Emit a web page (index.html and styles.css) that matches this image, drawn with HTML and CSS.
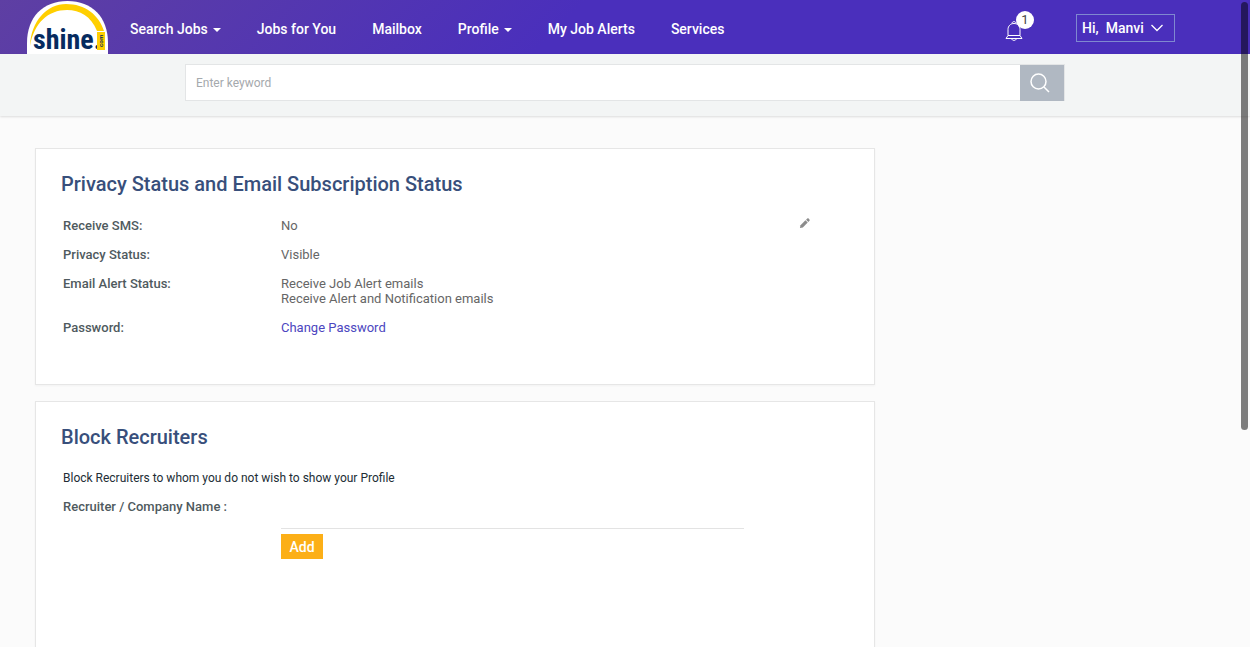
FILE: index.html
```html
<!DOCTYPE html>
<html lang="en">
<head>
<meta charset="utf-8">
<meta name="viewport" content="width=device-width, initial-scale=1">
<title>Shine.com</title>
<link rel="stylesheet" href="styles.css">
</head>
<body>
<header class="topbar">
  <a class="logo" href="#" aria-label="shine.com">
    <svg width="81" height="53" viewBox="0 0 81 53">
      <path fill="#fff" d="M0 53V42C0 16 16 0 40.500 0S81 16 81 42v11z"/>
      <path fill="#ffcf00" d="M3 45C4 20 20 3 39 3c19 0 33 11 38 27h-7C64 15 53 9 40 9 21 9 7 22 3 45z"/>
      <text class="logo-name" x="6" y="48">shine.</text>
      <rect x="70" y="31" width="8" height="18" fill="#ffcf00"/>
      <text class="logo-suffix" transform="translate(76 46) rotate(-90)">com</text>
    </svg>
  </a>
  <nav class="nav">
    <a class="has-menu" href="#">Search Jobs</a>
    <a href="#">Jobs for You</a>
    <a href="#">Mailbox</a>
    <a class="has-menu" href="#">Profile</a>
    <a href="#">My Job Alerts</a>
    <a href="#">Services</a>
  </nav>
  <button class="bell" type="button" aria-label="Notifications">
    <svg width="18" height="20" viewBox="0 0 18 20" fill="none" stroke="#fff">
      <path d="M3 14.500V8.500C3 5 5.500 2.500 9 2.500S15 5 15 8.500v6"/>
      <path d="M7 2.500c0-2.500 4-2.500 4 0M3 14.500h12M3 14.500L1 17.500h16l-2-3M6.500 17.500c.5 2.500 4.500 2.500 5 0"/>
    </svg>
    <span class="badge">1</span>
  </button>
  <button class="user" type="button">
    <span>Hi,</span><span>Manvi</span>
    <svg width="12" height="8" viewBox="0 0 12 8" fill="none" stroke="#fff" stroke-width="1.300"><path d="M.5 1L6 6.500 11.500 1"/></svg>
  </button>
</header>

<div class="searchbar">
  <form class="search">
    <input type="text" placeholder="Enter keyword" aria-label="Enter keyword">
    <button type="button" aria-label="Search">
      <svg width="20" height="20" viewBox="0 0 20 20" fill="none" stroke="#fff" stroke-width="1.500"><circle cx="8.500" cy="8.500" r="7.500"/><path d="M14 14l5 5"/></svg>
    </button>
  </form>
</div>

<main class="content">
  <section class="card">
    <h2>Privacy Status and Email Subscription Status</h2>
    <div class="card-row">
      <dl class="settings">
        <dt>Receive SMS:</dt><dd>No</dd>
        <dt>Privacy Status:</dt><dd>Visible</dd>
        <dt>Email Alert Status:</dt><dd>Receive Job Alert emails<br>Receive Alert and Notification emails</dd>
        <dt>Password:</dt><dd><a href="#">Change Password</a></dd>
      </dl>
      <button class="edit" type="button" aria-label="Edit">
        <svg width="11" height="11" viewBox="0 0 12 12" fill="#8c8c8c"><path d="M1 11l.7-3.200L7 2.500l2.500 2.500-5.300 5.300z"/><path d="M7.700 1.800L9 .6c.5-.5 1-.5 1.500 0l.9.900c.5.5.5 1 0 1.500L10.200 4.300z"/></svg>
      </button>
    </div>
  </section>

  <section class="card block">
    <h2>Block Recruiters</h2>
    <p>Block Recruiters to whom you do not wish to show your Profile</p>
    <form class="recruiter">
      <label for="company">Recruiter / Company Name :</label>
      <div class="field">
        <input id="company" type="text">
        <button type="button">Add</button>
      </div>
    </form>
  </section>
</main>
<div class="scroll-thumb"></div>
</body>
</html>
```

FILE: styles.css
```css
* { box-sizing: border-box; }
body {
  margin: 0;
  height: 100vh;
  overflow: hidden;
  background: #fbfbfb;
  font: 13px/15px Roboto, sans-serif;
  color: #666;
}
a { color: inherit; text-decoration: none; }
button { border: 0; padding: 0; background: none; font: inherit; color: inherit; }
svg { display: block; overflow: visible; }

.topbar {
  display: flex;
  height: 54px;
  padding: 0 75px 0 27px;
  background: linear-gradient(135deg, #5e3fa3 0, #4a2fbc 45%, #4a2fbc 100%);
  color: #fff;
  font-size: 14px;
  font-weight: 500;
}
.logo { align-self: flex-end; margin-right: 22px; }
.logo-name { font: bold 28px "Liberation Sans Narrow", "Roboto Condensed", sans-serif; fill: #062b5f; }
.logo-suffix { font: bold 6px "Liberation Sans", sans-serif; fill: #062b5f; }
.nav { display: flex; align-items: center; gap: 36px; padding-top: 4px; white-space: nowrap; }
.has-menu::after {
  content: "";
  display: inline-block;
  margin-left: 5px;
  vertical-align: 2px;
  border: 4px solid transparent;
  border-top-color: #fff;
  border-bottom: 0;
}
.bell { position: relative; align-self: center; margin: 7px 53px 0 auto; }
.badge {
  position: absolute;
  left: 11px;
  top: -10px;
  width: 18px;
  border-radius: 9px;
  background: #fff;
  color: #444;
  font: 13px/18px Roboto, sans-serif;
}
.user {
  display: flex;
  align-items: center;
  gap: 7px;
  align-self: center;
  width: 99px;
  height: 28px;
  margin-top: 2px;
  padding: 0 5px;
  border: 1px solid #7f88d0;
}

.searchbar {
  padding: 10px 16px 15px;
  background: #f3f5f5;
  box-shadow: 0 1px 2px rgba(0, 0, 0, .12);
}
.search {
  display: flex;
  max-width: 880px;
  height: 37px;
  margin: 0 auto;
  border: 1px solid #e3e5e6;
  background: #fff;
}
.search input {
  flex: 1;
  border: 0;
  padding: 0 10px;
  background: none;
  font: 12px Roboto, sans-serif;
}
.search input::placeholder { color: #a5a9ad; }
.search button { width: 44px; height: 36px; padding-left: 10px; background: #b0b8c2; }

.content { max-width: 1180px; margin: 32px auto 0; }
.card {
  max-width: 840px;
  min-height: 237px;
  margin-bottom: 16px;
  padding: 23px 25px;
  border: 1px solid #e6e6e6;
  background: #fff;
  box-shadow: 0 1px 2px rgba(0, 0, 0, .04);
}
.card h2 { margin: 0 0 22px; font-size: 20px; line-height: 24px; font-weight: 500; color: #384f7b; }
.card-row { display: flex; justify-content: space-between; padding: 0 39px 0 2px; }
.settings { display: grid; grid-template-columns: 218px auto; row-gap: 14px; margin: 0; }
.settings dt, .recruiter label { font-weight: 500; color: #4f5a5e; }
.settings dd { margin: 0; }
.settings a { color: #4b46c0; }
.edit { align-self: flex-start; }

.block { min-height: 300px; }
.block p { margin: 0 2px 13px; font-size: 12px; color: #222d35; }
.recruiter { display: grid; grid-template-columns: 218px 463px; margin: 0 2px; }
.field { display: grid; justify-items: start; gap: 5px; }
.field input { width: 100%; height: 30px; border: 0; border-bottom: 1px solid #e3e3e3; background: none; font: inherit; }
.field button { width: 42px; height: 25px; padding-top: 1px; background: #fcaf17; color: #fff; font-size: 14px; font-weight: 500; }

.scroll-thumb {
  position: fixed;
  top: 2px;
  right: 2px;
  width: 7px;
  height: 428px;
  border-radius: 4px;
  background: rgba(0, 0, 0, .5);
}
```
